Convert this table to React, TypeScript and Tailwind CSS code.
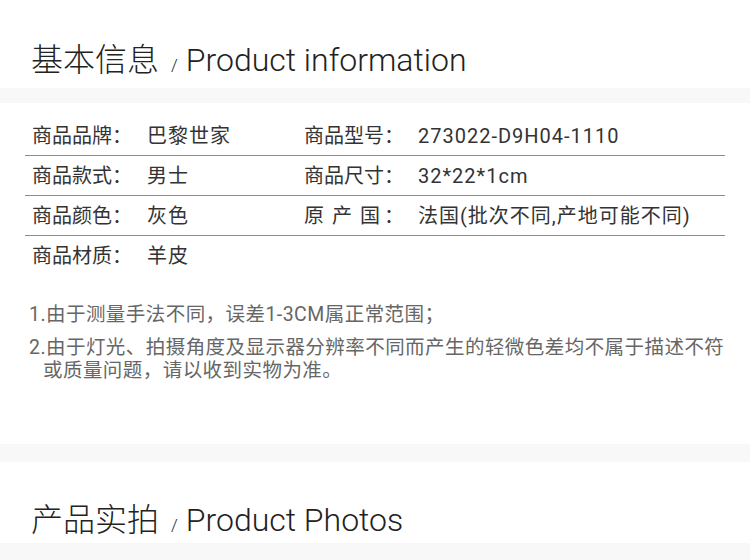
const font = { fontFamily: 'Roboto, "Noto Sans CJK SC", sans-serif' };

type Cell = { label: React.ReactNode; value: string };

const rows: [Cell, Cell | null][] = [
  [
    { label: "商品品牌：", value: "巴黎世家" },
    { label: "商品型号：", value: "273022-D9H04-1110" },
  ],
  [
    { label: "商品款式：", value: "男士" },
    { label: "商品尺寸：", value: "32*22*1cm" },
  ],
  [
    { label: "商品颜色：", value: "灰色" },
    {
      label: (
        <span className="flex">
          <span className="flex w-[80px] justify-between pr-[4px]">
            <span>原</span>
            <span>产</span>
            <span>国</span>
          </span>
          <span>：</span>
        </span>
      ),
      value: "法国(批次不同,产地可能不同)",
    },
  ],
  [{ label: "商品材质：", value: "羊皮" }, null],
];

function Title({ cn, en }: { cn: string; en: string }) {
  return (
    <div className="flex items-baseline pl-[31px] text-[#222]">
      <span className="text-[32px] leading-none font-light">{cn}</span>
      <span className="ml-[12px] mr-[8px] text-[17px] leading-none font-light">/</span>
      <span className="text-[32px] leading-none font-light">{en}</span>
    </div>
  );
}

export default function App() {
  return (
    <div className="w-[750px] h-[560px] overflow-hidden bg-white" style={font}>
      {/* 基本信息 */}
      <div className="h-[88px] pt-[44px]">
        <Title cn="基本信息" en="Product information" />
      </div>
      <div className="h-[15px] bg-[#f8f8f8]" />

      <div className="h-[341px] pt-[13px]">
        <div className="mx-[25px] text-[20px] text-[#333]">
          {rows.map((row, i) => (
            <div
              key={i}
              className={`flex h-[40px] items-center pl-[7px] ${
                i < rows.length - 1 ? "border-b border-[#8c8c8c]" : ""
              }`}
            >
              <div className="flex w-[272px] shrink-0">
                <div className="w-[115px] shrink-0">{row[0].label}</div>
                <div className="tracking-[1px]">{row[0].value}</div>
              </div>
              {row[1] && (
                <div className="flex">
                  <div className="w-[114px] shrink-0">{row[1].label}</div>
                  <div className="whitespace-nowrap tracking-[1px]">{row[1].value}</div>
                </div>
              )}
            </div>
          ))}
        </div>

        <div className="mt-[27px] pl-[29px] text-[19.5px] leading-[23px] tracking-[0.45px] text-[#666] whitespace-nowrap">
          <p>1.由于测量手法不同，误差1-3CM属正常范围；</p>
          <p className="mt-[10px]">2.由于灯光、拍摄角度及显示器分辨率不同而产生的轻微色差均不属于描述不符</p>
          <p className="pl-[14px]">或质量问题，请以收到实物为准。</p>
        </div>
      </div>

      <div className="h-[18px] bg-[#f8f8f8]" />
      {/* 产品实拍 */}
      <div className="h-[81px] pt-[42px]">
        <Title cn="产品实拍" en="Product Photos" />
      </div>
      <div className="h-[17px] bg-[#f8f8f8]" />
    </div>
  );
}
